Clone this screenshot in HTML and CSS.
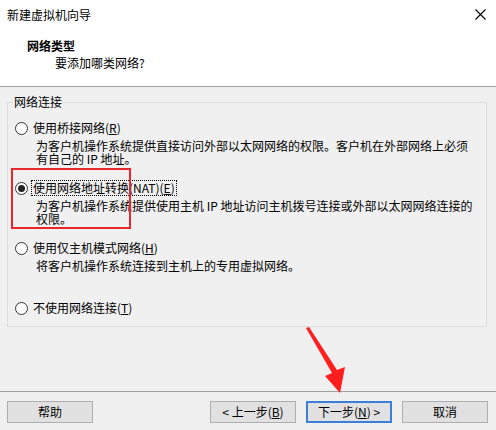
FILE: index.html
```html
<!DOCTYPE html>
<html lang="zh-CN">
<head>
<meta charset="utf-8">
<link rel="stylesheet" href="styles.css">
</head>
<body>
<div class="win">
  <div class="header">
    <div class="titlebar">
      <span class="title">新建虚拟机向导</span>
      <svg class="close" width="11" height="11" viewBox="0 0 11 11"><path d="M0.5 0.5L10.5 10.5M10.5 0.5L0.5 10.5" stroke="#000" stroke-width="1.1" fill="none"/></svg>
    </div>
    <div class="h1">网络类型</div>
    <div class="h2">要添加哪类网络?</div>
  </div>
  <div class="body">
    <div class="group">
      <div class="glabel">网络连接</div>
      <div class="opt first">
        <div class="row"><span class="radio"></span><span class="lbl">使用桥接网络(<u>R</u>)</span></div>
        <div class="desc">为客户机操作系统提供直接访问外部以太网网络的权限。客户机在外部网络上必须<br>有自己的 IP 地址。</div>
      </div>
      <div class="opt">
        <div class="row"><span class="radio on"></span><span class="lbl focus">使用网络地址转换(NAT)(<u>E</u>)</span></div>
        <div class="desc">为客户机操作系统提供使用主机 IP 地址访问主机拨号连接或外部以太网网络连接的<br>权限。</div>
      </div>
      <div class="opt">
        <div class="row"><span class="radio"></span><span class="lbl">使用仅主机模式网络(<u>H</u>)</span></div>
        <div class="desc">将客户机操作系统连接到主机上的专用虚拟网络。</div>
      </div>
      <div class="opt">
        <div class="row"><span class="radio"></span><span class="lbl">不使用网络连接(<u>T</u>)</span></div>
      </div>
    </div>
  </div>
  <div class="footer">
    <button class="btn">帮助</button>
    <div class="spacer"></div>
    <button class="btn">&lt; 上一步(<u>B</u>)</button>
    <button class="btn def">下一步(<u>N</u>) &gt;</button>
    <button class="btn">取消</button>
  </div>
  <div class="redbox"></div>
  <svg class="arrow" width="496" height="430" viewBox="0 0 496 430">
    <polygon points="306,328 309,327 337,370 345,367 340,393 325,376 332,373" fill="#ff1f1f"/>
  </svg>
</div>
</body>
</html>
```
FILE: styles.css
```css
* { box-sizing: border-box; }
html, body { margin: 0; padding: 0; }
body {
  font-family: "Noto Sans CJK SC", "Microsoft YaHei", sans-serif;
  font-size: 12px;
  color: #000;
  background: #f0f0f0;
}
.win {
  position: relative;
  width: 496px;
  height: 430px;
  background: #f0f0f0;
  overflow: hidden;
}
.header {
  background: #fff;
  height: 87px;
  border-bottom: 1px solid #a0a0a0;
}
.titlebar {
  height: 30px;
  display: flex;
  align-items: center;
  justify-content: space-between;
  padding: 0 10px 0 7px;
}
.title { line-height: 16px; }
.close { margin-top: -2px; }
.h1 {
  font-weight: bold;
  line-height: 16px;
  margin-top: 8px;
  padding-left: 27px;
}
.h2 {
  line-height: 16px;
  margin-top: 1px;
  padding-left: 55px;
}
.body {
  padding: 15px 9px 0 7px;
}
.group {
  border: 1px solid #dcdcdc;
  height: 225px;
}
.glabel {
  display: block;
  width: fit-content;
  margin: -8px 0 0 5px;
  padding: 0 1px;
  line-height: 14px;
  background: #f0f0f0;
}
.opt {
  height: 60px;
}
.opt.first { margin-top: 11px; }
.row {
  display: flex;
  align-items: center;
  height: 16px;
  padding-left: 7px;
}
.radio {
  width: 13px;
  height: 13px;
  border: 1px solid #333;
  border-radius: 50%;
  background: #fff;
  display: flex;
  align-items: center;
  justify-content: center;
  flex: none;
}
.radio.on::after {
  content: "";
  width: 7px;
  height: 7px;
  border-radius: 50%;
  background: #222;
}
.lbl {
  margin-left: 3px;
  line-height: 14px;
  padding: 0 1px;
  border: 1px solid transparent;
}
.lbl.focus { border: 1px dotted #000; }
.desc {
  margin-top: 3px;
  padding-left: 28px;
  line-height: 13px;
  white-space: nowrap;
}
.footer {
  position: absolute;
  left: 0; right: 0; top: 391px;
  border-top: 1px solid #a0a0a0;
  display: flex;
  gap: 10px;
  padding: 9px 8px 0 7px;
}
.spacer { flex: 1; }
.btn {
  width: 86px;
  height: 22px;
  background: #e1e1e1;
  border: 1px solid #adadad;
  font: inherit;
  font-size: 12px;
  line-height: 18px;
  padding: 0;
  color: #000;
}
.btn.def { border: 2px solid #3c7fd6; }
.redbox {
  position: absolute;
  left: 11px;
  top: 168px;
  width: 120px;
  height: 61px;
  border: 2px solid #e8262b;
}
.arrow {
  position: absolute;
  left: 0; top: 0;
  pointer-events: none;
}
```
